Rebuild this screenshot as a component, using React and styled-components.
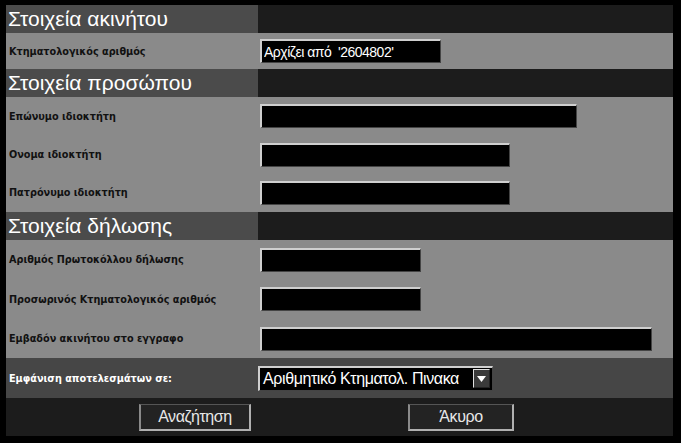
import React from 'react'
import styled, { createGlobalStyle } from 'styled-components'

const GlobalStyle = createGlobalStyle`
  html, body {
    margin: 0;
    background: #000;
  }
  body {
    font-family: "Liberation Sans", Arial, sans-serif;
  }
`

const sections = [
  {
    title: 'Στοιχεία ακινήτου',
    rowHeight: 36,
    fields: [{ label: 'Κτηματολογικός αριθμός', width: 181, value: "Αρχίζει από  '2604802'" }],
  },
  {
    title: 'Στοιχεία προσώπου',
    rowHeight: 38.4,
    fields: [
      { label: 'Επώνυμο ιδιοκτήτη', width: 317 },
      { label: 'Ονομα ιδιοκτήτη', width: 250 },
      { label: 'Πατρόνυμο ιδιοκτήτη', width: 250 },
    ],
  },
  {
    title: 'Στοιχεία δήλωσης',
    rowHeight: 39.4,
    fields: [
      { label: 'Αριθμός Πρωτοκόλλου δήλωσης', width: 161 },
      { label: 'Προσωρινός Κτηματολογικός αριθμός', width: 161 },
      { label: 'Εμβαδόν ακινήτου στο εγγραφο', width: 392 },
    ],
  },
]

export default function App() {
  return (
    <Page>
      <GlobalStyle />
      <Form>
        {sections.map((section) => (
          <React.Fragment key={section.title}>
            <SectionHeader>
              <SectionTitle>{section.title}</SectionTitle>
              <SectionFill />
            </SectionHeader>
            <Rows>
              {section.fields.map((field) => (
                <Row key={field.label} $height={section.rowHeight}>
                  <Label>{field.label}</Label>
                  <Field $width={field.width} readOnly value={field.value || ''} />
                </Row>
              ))}
            </Rows>
          </React.Fragment>
        ))}
        <DisplayRow>
          <Label $light>Εμφάνιση αποτελεσμάτων σε:</Label>
          <Select>
            <SelectText>Αριθμητικό Κτηματολ. Πινακα</SelectText>
            <ArrowBox>
              <svg width="9" height="6" viewBox="0 0 9 6">
                <path d="M0 0 L9 0 L4.5 6 Z" fill="#fff" />
              </svg>
            </ArrowBox>
          </Select>
        </DisplayRow>
        <ButtonBar>
          <Button>Αναζήτηση</Button>
          <Button $narrow>Άκυρο</Button>
        </ButtonBar>
      </Form>
    </Page>
  )
}

const Page = styled.div`
  padding: 5px 0 0 6px;
`

const Form = styled.div`
  width: 667px;
  display: flex;
  flex-direction: column;
`

const SectionHeader = styled.div`
  display: grid;
  grid-template-columns: 252px 1fr;
  height: 28px;
`

const SectionTitle = styled.div`
  background: #4b4b4b;
  color: #fff;
  font-size: 21px;
  line-height: 28px;
  padding-left: 2px;
  white-space: nowrap;
`

const SectionFill = styled.div`
  background: #1c1c1c;
`

const Rows = styled.div`
  background: #8a8a8a;
  display: flex;
  flex-direction: column;
`

const Row = styled.div`
  display: grid;
  grid-template-columns: 254px 1fr;
  align-items: center;
  height: ${(p) => p.$height}px;
`

const Label = styled.div`
  font-family: "DejaVu Sans", Verdana, sans-serif;
  font-weight: bold;
  font-size: 9.7px;
  color: ${(p) => (p.$light ? '#fff' : '#111')};
  padding-left: 3px;
  white-space: nowrap;
`

const Field = styled.input`
  box-sizing: border-box;
  width: ${(p) => p.$width}px;
  height: 24px;
  margin: 0;
  padding: 0 0 0 2px;
  background: #000;
  color: #fff;
  font-family: "Liberation Sans", Arial, sans-serif;
  font-size: 14px;
  letter-spacing: -0.5px;
  border-style: solid;
  border-width: 2px 1px 1px 2px;
  border-color: #cfcfcf #444 #444 #cfcfcf;
  outline: none;
`

const DisplayRow = styled.div`
  display: grid;
  grid-template-columns: 252px 1fr;
  align-items: center;
  height: 40px;
  background: #464646;
`

const Select = styled.div`
  box-sizing: border-box;
  width: 235px;
  height: 25px;
  display: flex;
  align-items: center;
  justify-content: space-between;
  background: #000;
  border-style: solid;
  border-width: 2px 1px 1px 2px;
  border-color: #cfcfcf #444 #444 #cfcfcf;
  padding: 0 2px 0 3px;
`

const SelectText = styled.span`
  color: #fff;
  font-size: 16px;
  letter-spacing: -0.4px;
  white-space: nowrap;
`

const ArrowBox = styled.div`
  box-sizing: border-box;
  width: 17px;
  height: 19px;
  display: flex;
  align-items: center;
  justify-content: center;
  background: #3a3a3a;
  border-style: solid;
  border-width: 1px;
  border-color: #e0e0e0 #222 #222 #e0e0e0;
`

const ButtonBar = styled.div`
  display: flex;
  align-items: center;
  gap: 157px;
  height: 38px;
  padding-left: 133px;
  background: #1c1c1c;
`

const Button = styled.button`
  box-sizing: border-box;
  width: ${(p) => (p.$narrow ? 106 : 112)}px;
  height: 27px;
  margin-top: 1px;
  background: #232323;
  color: #e8e8e8;
  font-family: "Liberation Sans", Arial, sans-serif;
  font-size: 16px;
  letter-spacing: -0.4px;
  border-style: solid;
  border-width: 1px 2px 2px 2px;
  border-color: #555 #b0b0b0 #b0b0b0 #8a8a8a;
  padding: 0;
`
